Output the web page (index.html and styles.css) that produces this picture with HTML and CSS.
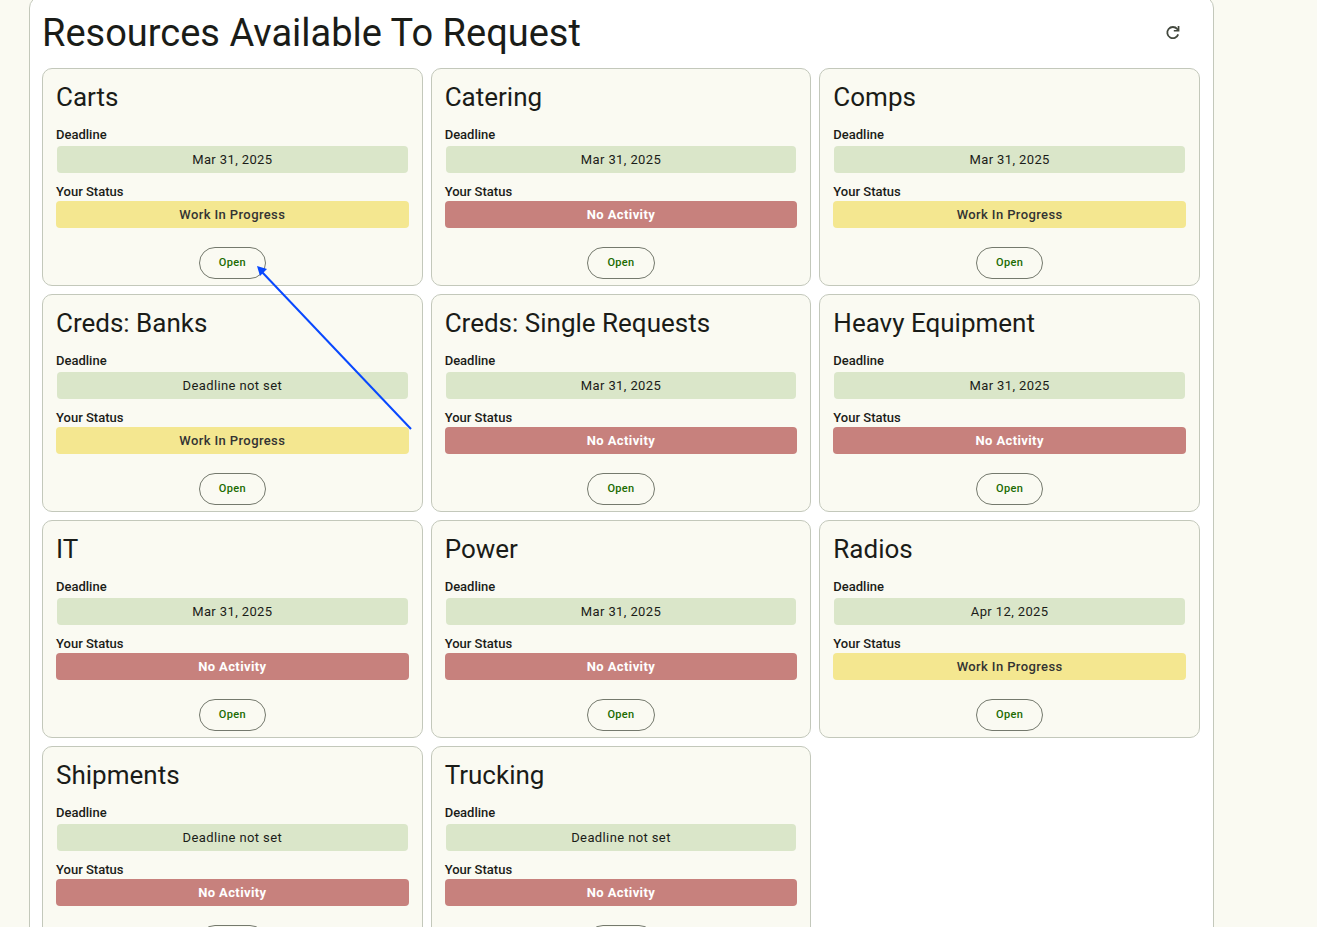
FILE: index.html
```html
<!DOCTYPE html>
<html lang="en">
<head>
  <meta charset="UTF-8" />
  <meta name="viewport" content="width=device-width, initial-scale=1" />
  <title>Resources Available To Request</title>
  <link rel="stylesheet" href="styles.css">
</head>
<body>

  <main class="panel">
    <header class="panel-header">
      <h1>Resources Available To Request</h1>
      <button class="refresh" type="button" aria-label="Refresh">
        <svg viewBox="0 0 20 20" width="20" height="20" aria-hidden="true">
          <path d="M15.2 11.4A5.6 5.6 0 1 1 14.2 6L15.4 7.6" fill="none" stroke="currentColor" stroke-width="1.8" />
          <path d="M16.4 3V8.6H10.8V7H14.7V3Z" fill="currentColor" />
        </svg>
      </button>
    </header>

    <section class="cards" id="cards" aria-label="Resources">
      <!-- Cards go here -->
    </section>

    <!-- Pointer to the first Open button -->
    <svg class="pointer" viewBox="0 0 156 166" width="156" height="166" aria-hidden="true">
      <path d="M6 7L155 164" stroke="#0848ff" stroke-width="2" />
      <path d="M1 1L11 4L4 11Z" fill="#0848ff" />
    </svg>
  </main>

  <script>
    (() => {
      const resources = [
        { name: 'Carts', deadline: 'Mar 31, 2025', active: true },
        { name: 'Catering', deadline: 'Mar 31, 2025', active: false },
        { name: 'Comps', deadline: 'Mar 31, 2025', active: true },
        { name: 'Creds: Banks', deadline: null, active: true },
        { name: 'Creds: Single Requests', deadline: 'Mar 31, 2025', active: false },
        { name: 'Heavy Equipment', deadline: 'Mar 31, 2025', active: false },
        { name: 'IT', deadline: 'Mar 31, 2025', active: false },
        { name: 'Power', deadline: 'Mar 31, 2025', active: false },
        { name: 'Radios', deadline: 'Apr 12, 2025', active: true },
        { name: 'Shipments', deadline: null, active: false },
        { name: 'Trucking', deadline: null, active: false },
      ];

      const cards = document.querySelector('#cards');

      resources.forEach(resource => {
        const card = document.createElement('article');
        card.className = 'card';
        card.innerHTML = `
          <h2>${resource.name}</h2>
          <dl>
            <dt>Deadline</dt>
            <dd class="deadline">${resource.deadline || 'Deadline not set'}</dd>
            <dt>Your Status</dt>
            <dd class="status ${resource.active ? 'in-progress' : 'no-activity'}">${resource.active ? 'Work In Progress' : 'No Activity'}</dd>
          </dl>
          <button class="open" type="button">Open</button>
        `;
        cards.appendChild(card);
      });
    })();
  </script>
</body>
</html>
```
FILE: styles.css
```css
* {
  box-sizing: border-box;
}

body {
  margin: 0;
  background: #fafaf2;
  color: #1a1c18;
  font-family: Roboto, sans-serif;
  font-size: 13px;
}

.panel {
  position: relative;
  margin: -4px 103px 24px 29px;
  padding: 12px 13px 12px 12px;
  background: #fff;
  border: 1px solid #c3c8bb;
  border-radius: 12px;
}

.panel-header {
  display: flex;
  align-items: center;
  justify-content: space-between;
  padding-right: 7px;
  margin-bottom: 11px;
}

h1 {
  margin: 0;
  font-size: 38px;
  font-weight: 400;
  line-height: 48px;
}

.refresh {
  display: flex;
  align-items: center;
  justify-content: center;
  width: 40px;
  height: 40px;
  padding: 0;
  border: none;
  border-radius: 50%;
  background: none;
  color: #43483e;
  cursor: pointer;
}

.cards {
  display: grid;
  grid-template-columns: repeat(3, 1fr);
  gap: 8px;
}

.card {
  display: flex;
  flex-direction: column;
  padding: 12px 13px 6px;
  background: #fafaf2;
  border: 1px solid #c3c8bb;
  border-radius: 10px;
}

h2 {
  margin: 0 0 13px;
  font-size: 26px;
  font-weight: 400;
  line-height: 32px;
}

dl {
  margin: 0;
}

dt {
  font-weight: 500;
  line-height: 18px;
}

dd {
  margin: 0;
  border-radius: 4px;
  line-height: 27px;
  text-align: center;
  letter-spacing: 0.03em;
}

.deadline {
  margin: 2px 1px 10px;
  background: #dae6c9;
}

.status {
  font-weight: 500;
}

.in-progress {
  background: #f4e790;
  color: #333;
}

.no-activity {
  background: #c7817d;
  color: #fff;
  font-weight: 700;
}

.open {
  align-self: center;
  height: 32px;
  margin-top: 19px;
  padding: 0 19px 2px;
  border: 1px solid #74796d;
  border-radius: 16px;
  background: none;
  color: #206b00;
  font-family: inherit;
  font-size: 11px;
  font-weight: 500;
  letter-spacing: 0.03em;
  cursor: pointer;
}

.pointer {
  position: absolute;
  top: 268px;
  left: 226px;
  pointer-events: none;
}
```
